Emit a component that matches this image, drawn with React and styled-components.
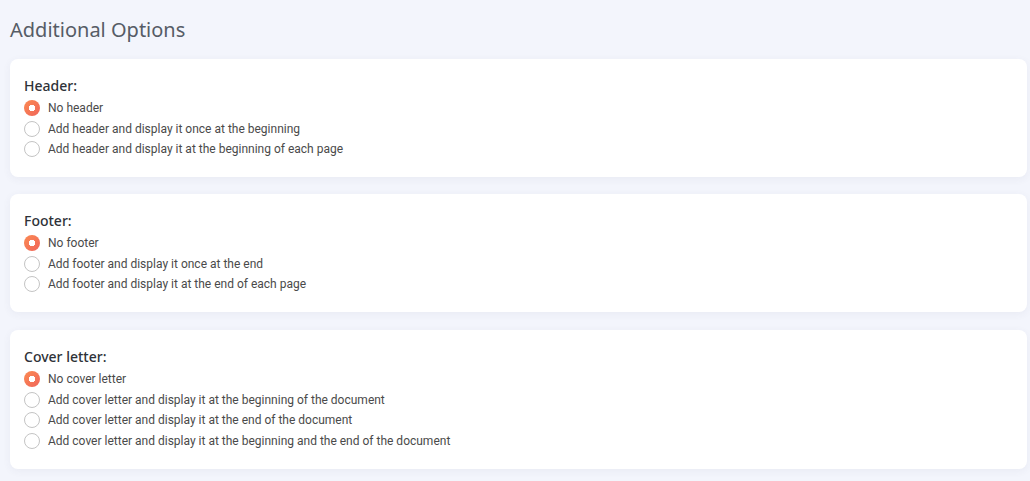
import styled, { createGlobalStyle } from 'styled-components';

const GlobalStyle = createGlobalStyle`
  body {
    margin: 0;
    background: #f3f5fc;
    font-family: Roboto, "Liberation Sans", sans-serif;
  }
`;

const Page = styled.div`
  padding: 17px 3px 13px 10px;
  display: flex;
  flex-direction: column;
`;

const Heading = styled.h2`
  margin: 0 0 16px;
  font-family: "Noto Sans", "Open Sans", sans-serif;
  font-size: 20px;
  font-weight: 400;
  line-height: 26px;
  color: #565c66;
`;

const Card = styled.section`
  background: #fff;
  border-radius: 8px;
  box-shadow: 0 2px 8px rgba(60, 70, 110, 0.06);
  padding: 17px 14px 17.5px;
  margin-bottom: ${(p) => p.$gap || 17}px;
`;

const CardTitle = styled.div`
  font-family: "Noto Sans", "Open Sans", sans-serif;
  font-size: 14px;
  font-weight: 500;
  line-height: 20px;
  color: #2e3238;
  margin-bottom: 2px;
`;

const OptionList = styled.div`
  display: flex;
  flex-direction: column;
`;

const Option = styled.label`
  display: flex;
  align-items: center;
  gap: 8px;
  height: 20.5px;
  font-size: 12px;
  color: #4a4a4a;
  cursor: pointer;
`;

const Radio = styled.span`
  width: 16px;
  height: 16px;
  box-sizing: border-box;
  border-radius: 50%;
  flex-shrink: 0;
  border: ${(p) => (p.$checked ? 'none' : '1px solid #c4c4c4')};
  background: ${(p) =>
    p.$checked
      ? 'radial-gradient(circle, #fff 0 3px, transparent 3.5px), linear-gradient(135deg, #fb8a52, #f0655a)'
      : '#fff'};
`;

const sections = [
  {
    title: 'Header:',
    options: [
      'No header',
      'Add header and display it once at the beginning',
      'Add header and display it at the beginning of each page',
    ],
  },
  {
    title: 'Footer:',
    gap: 18,
    options: [
      'No footer',
      'Add footer and display it once at the end',
      'Add footer and display it at the end of each page',
    ],
  },
  {
    title: 'Cover letter:',
    options: [
      'No cover letter',
      'Add cover letter and display it at the beginning of the document',
      'Add cover letter and display it at the end of the document',
      'Add cover letter and display it at the beginning and the end of the document',
    ],
  },
];

const App = () => {
  return (
    <>
      <GlobalStyle />
      <Page>
        <Heading>Additional Options</Heading>
        {sections.map((s) => (
          <Card key={s.title} $gap={s.gap}>
            <CardTitle>{s.title}</CardTitle>
            <OptionList>
              {s.options.map((o, i) => (
                <Option key={o}>
                  <Radio $checked={i === 0} />
                  {o}
                </Option>
              ))}
            </OptionList>
          </Card>
        ))}
      </Page>
    </>
  );
};

export default App;
